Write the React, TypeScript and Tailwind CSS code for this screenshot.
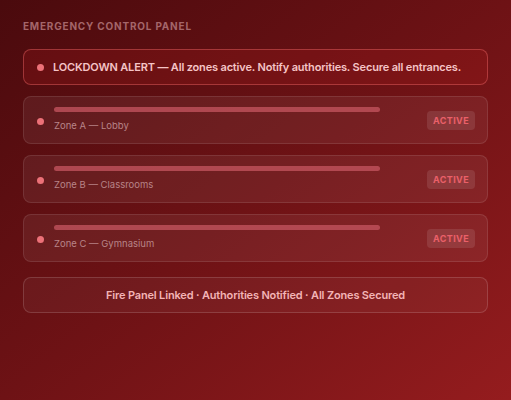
const zones = [
  { name: "Zone A — Lobby" },
  { name: "Zone B — Classrooms" },
  { name: "Zone C — Gymnasium" },
];

export default function App() {
  return (
    <div
      className="min-h-[400px] w-full bg-gradient-to-br from-[#4a0a0d] via-[#6e1215] to-[#951c1e] px-[23px] pt-[19px] pb-8"
      style={{ fontFamily: "Inter, 'Noto Sans', sans-serif" }}
    >
      {/* HEADER */}
      <h1 className="text-[10px] font-bold uppercase tracking-[0.08em] text-[#a4666a] mb-[15px]">
        Emergency Control Panel
      </h1>

      {/* ALERT */}
      <div className="flex items-center gap-[9px] h-[36px] px-[13px] rounded-lg border border-[#f87171]/40 bg-[#b91c1c]/20 mb-[11px]">
        <span className="w-[7px] h-[7px] rounded-full bg-[#ec7178] shrink-0" />
        <p className="text-[11px] font-semibold text-[#f5c4c6] tracking-[-0.015em]">
          LOCKDOWN ALERT — All zones active. Notify authorities. Secure all entrances.
        </p>
      </div>

      {/* ZONES */}
      <div className="flex flex-col gap-[11px]">
        {zones.map((zone) => (
          <ZoneCard key={zone.name} name={zone.name} />
        ))}
      </div>

      {/* FOOTER */}
      <div className="mt-[15px] h-[36px] flex items-center justify-center rounded-lg border border-white/15 bg-white/[0.04]">
        <p className="text-[11px] font-semibold text-[#f3b4b6] tracking-[-0.015em]">
          Fire Panel Linked · Authorities Notified · All Zones Secured
        </p>
      </div>
    </div>
  );
}

function ZoneCard({ name }: { name: string }) {
  return (
    <div className="flex items-center h-[48px] pl-[13px] pr-[12px] rounded-lg border border-white/10 bg-white/[0.06]">
      <span className="w-[7px] h-[7px] rounded-full bg-[#ec7178] shrink-0 mt-[3px]" />
      <div className="flex-1 ml-[10px] flex flex-col gap-[9px] -mt-[3px]">
        <div className="h-[5px] w-[326px] rounded-full bg-[#c0535c]/80" />
        <span className="text-[9.5px] leading-none text-[#b88488]">{name}</span>
      </div>
      <span className="text-[9px] font-bold tracking-[0.04em] text-[#ea6069] bg-white/10 rounded-[4px] px-[6px] py-[5px] leading-none">
        ACTIVE
      </span>
    </div>
  );
}
